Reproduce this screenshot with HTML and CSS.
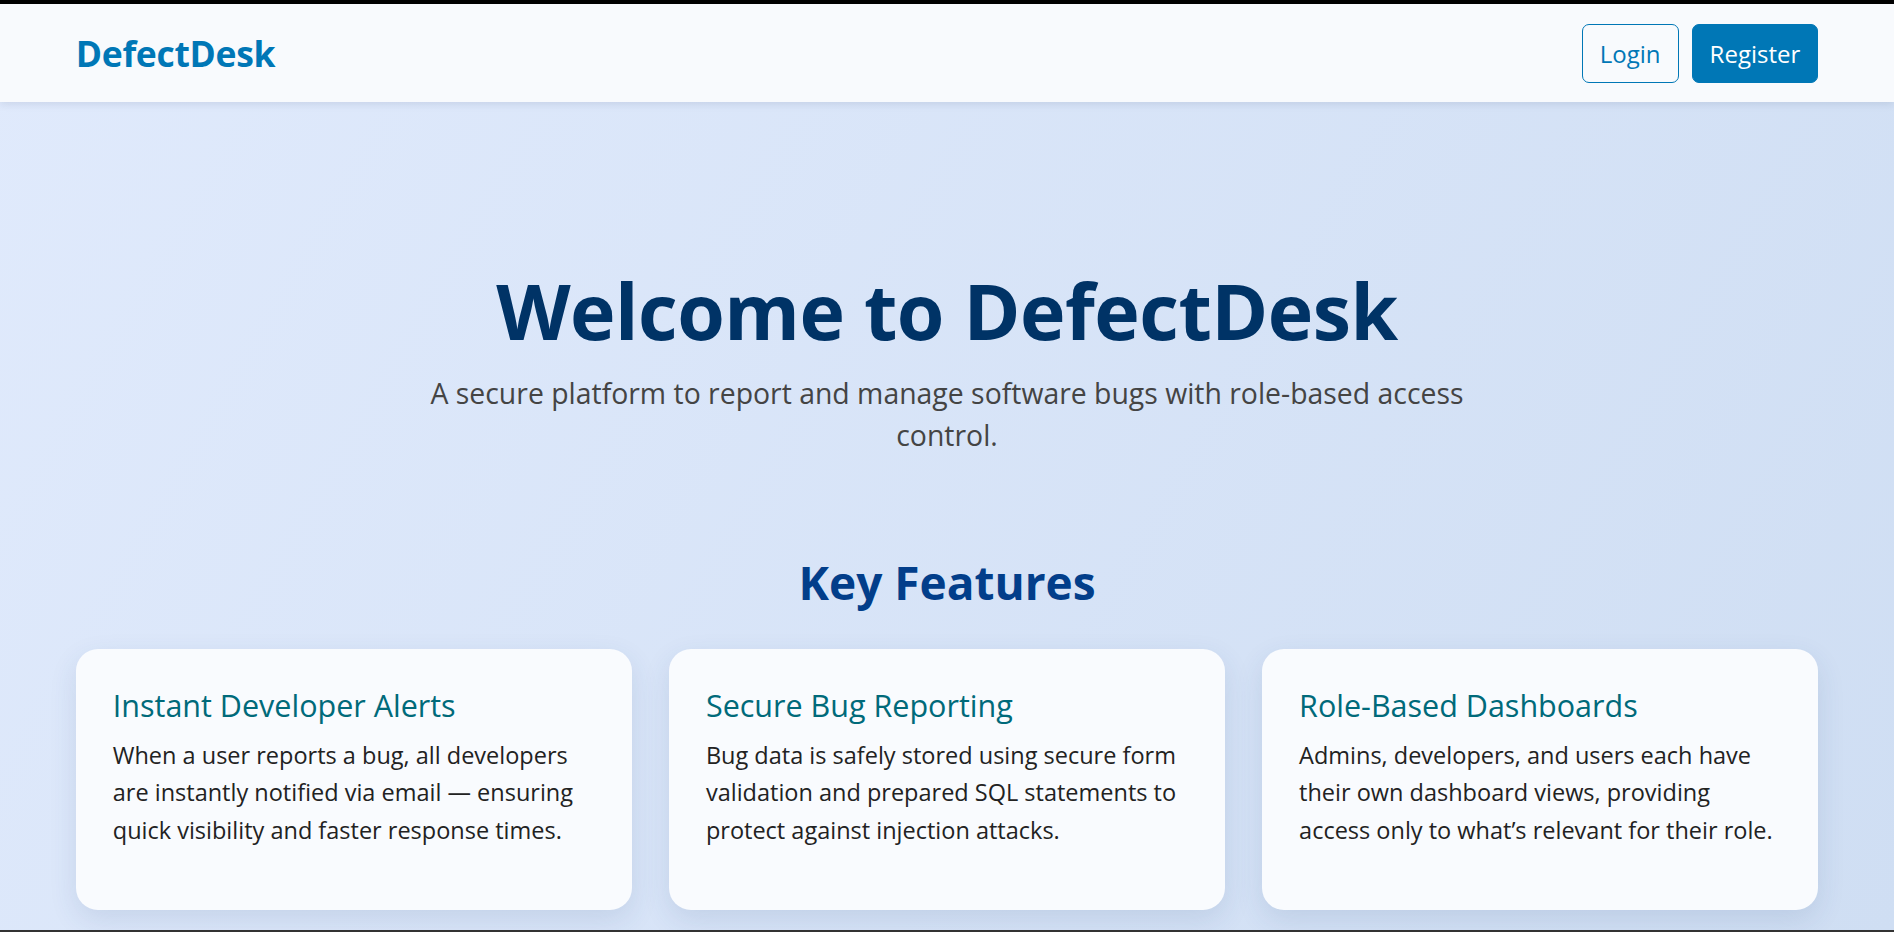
FILE: index.html
```html
<!DOCTYPE html>
<html lang="en">
<head>
<meta charset="utf-8">
<title>DefectDesk</title>
<link rel="stylesheet" href="styles.css">
</head>
<body>
<div class="page">
  <header class="topbar">
    <div class="logo">DefectDesk</div>
    <nav class="actions">
      <a class="btn btn-outline" href="#">Login</a>
      <a class="btn btn-solid" href="#">Register</a>
    </nav>
  </header>
  <main class="content">
    <section class="hero">
      <h1 class="hero-title">Welcome to DefectDesk</h1>
      <p class="hero-text">A secure platform to report and manage software bugs with role-based access control.</p>
    </section>
    <section class="features">
      <h2 class="features-title">Key Features</h2>
      <div class="feature-grid">
        <article class="card">
          <h3 class="card-title">Instant Developer Alerts</h3>
          <p class="card-text">When a user reports a bug, all developers are instantly notified via email — ensuring quick visibility and faster response times.</p>
        </article>
        <article class="card">
          <h3 class="card-title">Secure Bug Reporting</h3>
          <p class="card-text">Bug data is safely stored using secure form validation and prepared SQL statements to protect against injection attacks.</p>
        </article>
        <article class="card">
          <h3 class="card-title">Role-Based Dashboards</h3>
          <p class="card-text">Admins, developers, and users each have their own dashboard views, providing access only to what’s relevant for their role.</p>
        </article>
      </div>
    </section>
  </main>
</div>
</body>
</html>
```

FILE: styles.css
```css
* { box-sizing: border-box; }

html, body {
  margin: 0;
  padding: 0;
}

body {
  font-family: "Open Sans", "Noto Sans", "Liberation Sans", sans-serif;
  background: linear-gradient(120deg, #e0eafc 0%, #cfdef3 100%);
  color: #222;
}

.page {
  min-height: 100vh;
  display: flex;
  flex-direction: column;
  border-top: 4px solid #000;
  border-bottom: 2px solid #333;
  overflow: hidden;
}

.topbar {
  height: 98px;
  padding: 0 4%;
  display: flex;
  align-items: center;
  justify-content: space-between;
  background: #f8fafd;
  box-shadow: 0 2px 8px rgba(30, 50, 90, 0.12);
  position: relative;
  z-index: 1;
}

.logo {
  font-size: 35.5px;
  font-weight: 700;
  color: #0077b6;
  letter-spacing: -0.3px;
}

.actions {
  display: flex;
  gap: 13px;
}

.btn {
  display: inline-block;
  font-size: 24px;
  line-height: 33px;
  padding: 12px 17px;
  border: 1px solid #0077b6;
  border-radius: 7px;
  text-decoration: none;
}

.btn-outline {
  color: #0077b6;
  background: transparent;
}

.btn-solid {
  color: #fff;
  background: #0077b6;
}

.content {
  flex: 1;
  padding: 0 4%;
}

.hero {
  padding-top: 161px;
  text-align: center;
}

.hero-title {
  margin: 0;
  font-size: 77px;
  line-height: 96px;
  font-weight: 700;
  color: #003366;
  letter-spacing: -0.5px;
}

.hero-text {
  margin: 13px auto 0;
  max-width: 1080px;
  font-size: 28.4px;
  line-height: 42px;
  color: #444;
}

.features {
  margin-top: 96px;
}

.features-title {
  margin: 0;
  text-align: center;
  font-size: 46px;
  line-height: 60px;
  font-weight: 700;
  color: #023e8a;
}

.feature-grid {
  margin-top: 37px;
  display: grid;
  grid-template-columns: repeat(3, 1fr);
  gap: 37px;
}

.card {
  background: #f9fbfe;
  border-radius: 22px;
  padding: 39px 37px 39px;
  box-shadow: 0 10px 28px rgba(40, 70, 120, 0.12);
}

.card-title {
  margin: 0 0 15px;
  font-size: 30.5px;
  line-height: 34px;
  font-weight: 500;
  color: #006a7a;
}

.card-text {
  margin: 0 0 22px;
  font-size: 23.5px;
  line-height: 37.4px;
  color: #222;
}
```
